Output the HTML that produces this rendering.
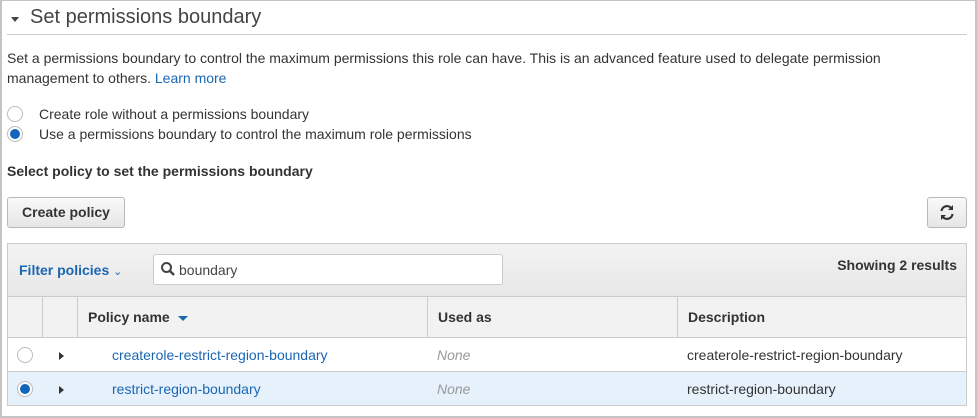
<!DOCTYPE html>
<html><head><style>
*{box-sizing:border-box;margin:0;padding:0}
body{width:977px;height:418px;overflow:hidden;background:#fff;font-family:"Liberation Sans",Arial,sans-serif;color:#333;font-size:14px;position:relative}
.frame{position:absolute;left:0;top:0;width:977px;height:418px;border:2px solid #c4c4c4;border-top:1px solid #c4c4c4}
.abs{position:absolute}
.h{left:30px;top:6px;font-size:20px;color:#444}
.caret{left:11px;top:17px;width:0;height:0;border-left:4px solid transparent;border-right:4px solid transparent;border-top:5px solid #444}
.rule{left:7px;top:34px;width:960px;height:1px;background:#ccc}
a{color:#1a66b3;text-decoration:none}
.radio{width:16px;height:16px;border-radius:50%;border:1px solid #bbb;background:#fff}
.radio.on::after{content:"";position:absolute;left:2px;top:2px;width:10px;height:10px;border-radius:50%;background:#1166bb}
.btn{border:1px solid #b8b8b8;border-radius:3px;background:linear-gradient(#f9f9f9,#e6e6e6);font-weight:bold;color:#333}
.tbl{left:7px;top:243px;width:960px;height:163px;border:1px solid #ccc}
.tri{width:0;height:0;border-top:4px solid transparent;border-bottom:4px solid transparent;border-left:5px solid #333}
</style></head><body>
<div class="frame"></div>
<div class="abs caret"></div>
<div class="abs h">Set permissions boundary</div>
<div class="abs rule"></div>
<div class="abs" style="left:7px;top:48px;line-height:20px;width:950px">Set a permissions boundary to control the maximum permissions this role can have. This is an advanced feature used to delegate permission management to others. <a>Learn more</a></div>
<div class="abs radio" style="left:7px;top:106px"></div>
<div class="abs" style="left:39px;top:106px">Create role without a permissions boundary</div>
<div class="abs radio on" style="left:7px;top:126px"></div>
<div class="abs" style="left:39px;top:126px">Use a permissions boundary to control the maximum role permissions</div>
<div class="abs" style="left:7px;top:163px;font-weight:bold">Select policy to set the permissions boundary</div>
<div class="abs btn" style="left:7px;top:197px;width:118px;height:31px;line-height:29px;text-align:center">Create policy</div>
<div class="abs btn" style="left:927px;top:197px;width:40px;height:31px">
<svg width="38" height="29" viewBox="0 0 38 29"><g fill="none" stroke="#333" stroke-width="2.2"><path d="M13.5 13a5.5 5.5 0 0 1 10-2.5"/><path d="M24.5 16a5.5 5.5 0 0 1-10 2.5"/></g><path d="M25 7v5h-5z" fill="#333"/><path d="M13 22v-5h5z" fill="#333"/></svg></div>
<div class="abs tbl">
 <div class="abs" style="left:0;top:0;width:958px;height:53px;background:linear-gradient(#f2f2f2,#e8e8e8);border-bottom:1px solid #ccc"></div>
 <div class="abs" style="left:11px;top:18px;font-weight:bold;color:#1a66b3">Filter policies <span style="font-weight:normal;font-size:11px">&#8964;</span></div>
 <div class="abs" style="left:145px;top:10px;width:350px;height:31px;background:#fff;border:1px solid #ccc;border-radius:3px">
  <svg class="abs" style="left:6px;top:6px" width="16" height="16" viewBox="0 0 16 16"><circle cx="6.5" cy="6.5" r="4.5" fill="none" stroke="#444" stroke-width="2"/><path d="M10 10l4 4" stroke="#444" stroke-width="2.4"/></svg>
  <div class="abs" style="left:25px;top:7px;font-size:14px;color:#444">boundary</div>
 </div>
 <div class="abs" style="right:9px;top:13px;font-weight:bold">Showing 2 results</div>
 <div class="abs" style="left:0;top:53px;width:958px;height:41px;background:#f2f2f2;border-bottom:1px solid #ccc"></div>
 <div class="abs" style="left:34px;top:53px;width:1px;height:41px;background:#ccc"></div>
 <div class="abs" style="left:69px;top:53px;width:1px;height:41px;background:#ccc"></div>
 <div class="abs" style="left:419px;top:53px;width:1px;height:41px;background:#ccc"></div>
 <div class="abs" style="left:669px;top:53px;width:1px;height:41px;background:#ccc"></div>
 <div class="abs" style="left:80px;top:65px;font-weight:bold">Policy name <span style="display:inline-block;width:0;height:0;border-left:5px solid transparent;border-right:5px solid transparent;border-top:5px solid #1a66b3;margin-left:4px;vertical-align:middle"></span></div>
 <div class="abs" style="left:430px;top:65px;font-weight:bold">Used as</div>
 <div class="abs" style="left:680px;top:65px;font-weight:bold">Description</div>
 <div class="abs" style="left:0;top:94px;width:958px;height:34px;border-bottom:1px solid #ccc"></div>
 <div class="abs radio" style="left:9px;top:103px"></div>
 <div class="abs tri" style="left:51px;top:108px"></div>
 <div class="abs" style="left:104px;top:103px"><a>createrole-restrict-region-boundary</a></div>
 <div class="abs" style="left:429px;top:103px;font-style:italic;color:#999">None</div>
 <div class="abs" style="left:679px;top:103px">createrole-restrict-region-boundary</div>
 <div class="abs" style="left:0;top:128px;width:958px;height:34px;background:#e6f1fc;border-bottom:1px solid #ccc"></div>
 <div class="abs radio on" style="left:9px;top:137px"></div>
 <div class="abs tri" style="left:51px;top:142px"></div>
 <div class="abs" style="left:104px;top:137px"><a>restrict-region-boundary</a></div>
 <div class="abs" style="left:429px;top:137px;font-style:italic;color:#999">None</div>
 <div class="abs" style="left:679px;top:137px">restrict-region-boundary</div>
</div>
</body></html>
